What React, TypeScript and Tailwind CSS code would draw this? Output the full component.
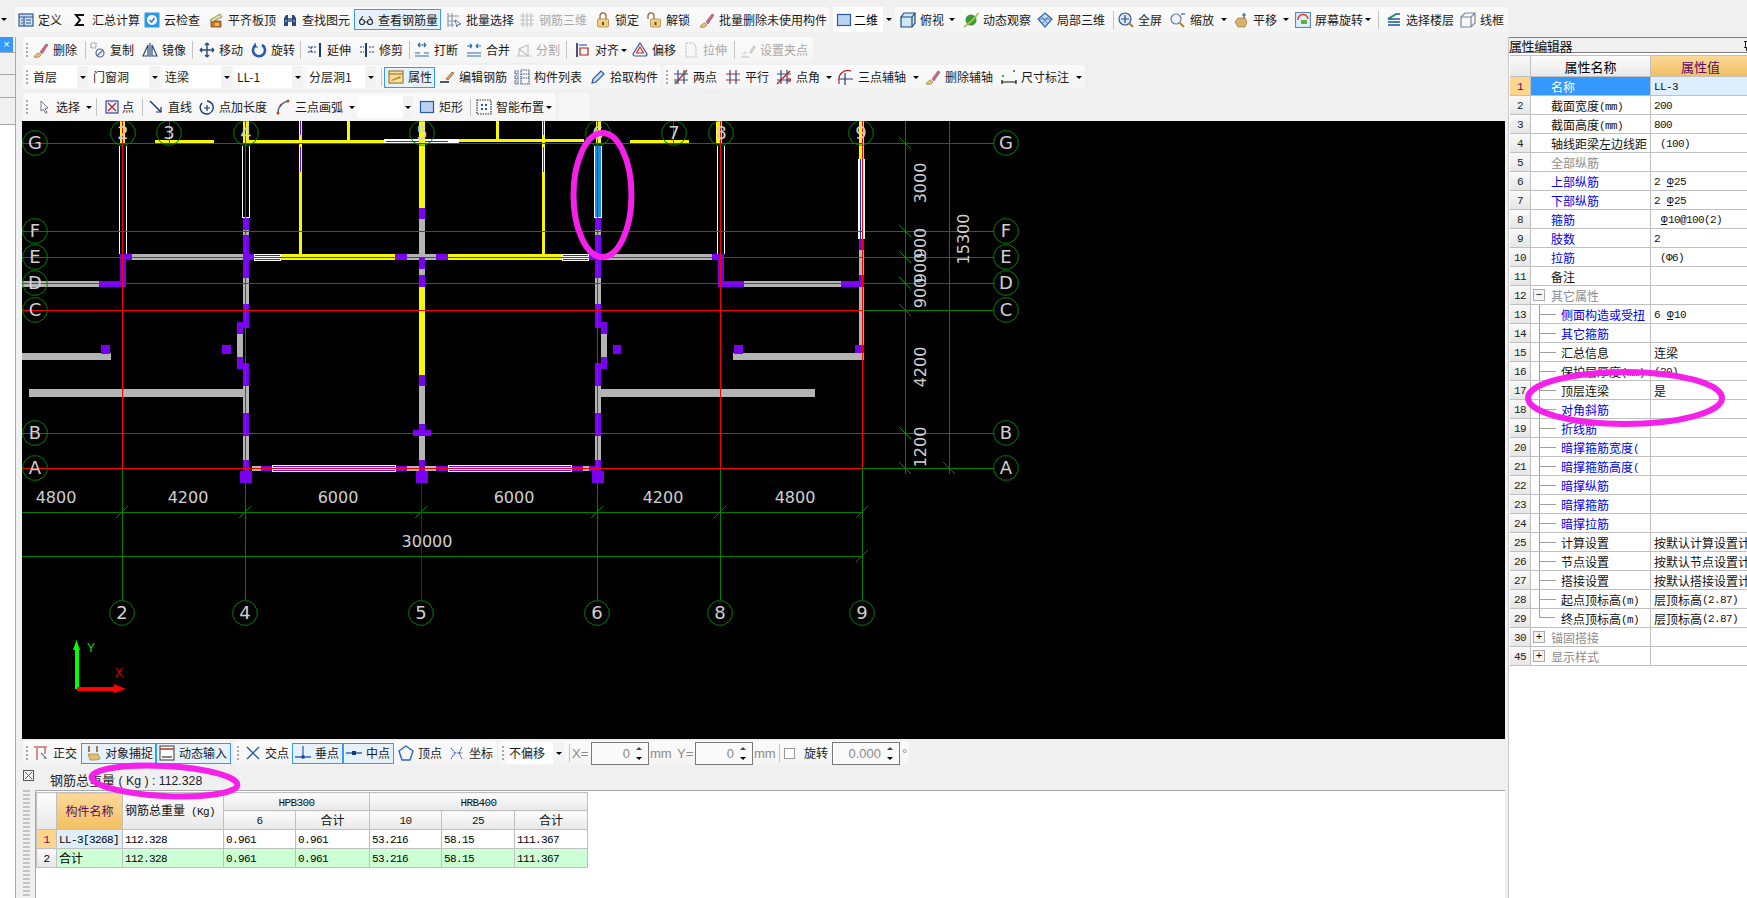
import type { ReactNode } from "react";

// small toolbar glyphs, all on a 16x16 box
function Ic({ children }: { children: ReactNode }) {
  return (
    <svg viewBox="0 0 16 16" fill="none" strokeWidth="1.2" className="w-4 h-4 shrink-0">
      {children}
    </svg>
  );
}

const brush = (
  <>
    <path d="M1 15c2-3 3-4 5-4l2 2c-1 2-4 3-7 2z" fill="#e8c070" stroke="#8a6a30" strokeWidth=".6" />
    <path d="M7 10l6-8 2 1-6 9z" fill="#d06a6a" stroke="#7a4a9a" strokeWidth=".6" />
  </>
);

const icons: Record<string, ReactNode> = {
  define: (
    <Ic>
      <rect x="1" y="2" width="14" height="12" fill="#cfe0f5" stroke="#2a5a9a" />
      <path d="M1 5h14M6 5v9M8 8h5M8 11h5M3 8h2M3 11h2" stroke="#2a5a9a" />
    </Ic>
  ),
  sigma: <Ic><path d="M12 3H4l4 5-4 5h8" stroke="#111" strokeWidth="2" /></Ic>,
  cloud: (
    <Ic>
      <rect x="0.5" y="0.5" width="15" height="15" rx="1" fill="#2a9ae8" />
      <circle cx="8" cy="8" r="5" fill="#fff" />
      <path d="M5.5 8l2 2 3-4" stroke="#2a7ad0" strokeWidth="1.5" />
    </Ic>
  ),
  slab: (
    <Ic>
      <path d="M3 15V9h10v6z" fill="#c8782a" stroke="#6a3a10" strokeWidth=".7" />
      <path d="M2 8l10-6 2 3-10 5z" fill="#e8d890" stroke="#5a7a50" strokeWidth=".7" />
      <rect x="7" y="11" width="4" height="3" fill="#f0c030" />
    </Ic>
  ),
  find: (
    <Ic>
      <path d="M2 14V6l2-3h2v11zM10 14V3h2l2 3v8z" fill="#2a4a7a" />
      <rect x="6" y="6" width="4" height="4" fill="#5a7aaa" />
      <path d="M3 9h2M11 9h2" stroke="#cfe0f5" />
    </Ic>
  ),
  glasses: (
    <Ic>
      <circle cx="4" cy="10" r="2.5" stroke="#333" />
      <circle cx="12" cy="10" r="2.5" stroke="#333" />
      <path d="M6.5 10h3M2 8l3-4M14 8l-3-4" stroke="#333" />
    </Ic>
  ),
  batch: (
    <Ic>
      <path d="M2 1v14M6 1v14M2 4h11M2 9h9M2 13h6" stroke="#8a9ab0" />
      <path d="M9 8l6 4-3 .6-1 2.4z" fill="#fff" stroke="#3a5a8a" strokeWidth=".8" />
    </Ic>
  ),
  rebar3d: <Ic><path d="M1 4h14M1 8h14M1 12h14M4 1v14M8 1v14M12 1v14" stroke="#c4c4c4" /></Ic>,
  lock: (
    <Ic>
      <path d="M5 7V4a3 3 0 0 1 6 0v3" stroke="#8a7a50" strokeWidth="1.4" />
      <rect x="2.5" y="7" width="11" height="8" rx="1" fill="#f0d080" stroke="#a08030" strokeWidth=".7" />
      <rect x="7" y="10" width="2" height="3" fill="#704a10" />
    </Ic>
  ),
  unlock: (
    <Ic>
      <path d="M2 7V4a3 3 0 0 1 6 0v3" stroke="#8a7a50" strokeWidth="1.4" />
      <rect x="4.5" y="7" width="10" height="8" rx="1" fill="#f0d080" stroke="#a08030" strokeWidth=".7" />
      <rect x="8.5" y="10" width="2" height="3" fill="#704a10" />
    </Ic>
  ),
  brush: <Ic>{brush}</Ic>,
  brushGray: <Ic><path d="M1 15h8M10 10l4-6 1 1-4 6z" stroke="#c4c4c4" /><path d="M2 12l3-3 2 2-3 2z" fill="#ddd" /></Ic>,
  plane: <Ic><rect x="1.5" y="2.5" width="13" height="11" fill="#bcd2f2" stroke="#2a5aa0" /></Ic>,
  top: (
    <Ic>
      <path d="M1 5l3-4h11v10l-3 4H1z" fill="#cfe6f5" stroke="#1a4a7a" />
      <path d="M1 5h11v10M12 5l3-4" stroke="#1a4a7a" />
    </Ic>
  ),
  orbit: (
    <Ic>
      <circle cx="8" cy="8" r="5.5" fill="#3a9a3a" />
      <path d="M1 15C4 13 13 6 15 1" stroke="#b0c050" strokeWidth="2" />
    </Ic>
  ),
  local3d: (
    <Ic>
      <path d="M8 1l7 6-7 8-7-8z" fill="#bcd8f2" stroke="#3a6aa0" />
      <path d="M4 4l7 8M12 4l-7 8M1 7h14" stroke="#3a6aa0" strokeWidth=".8" />
    </Ic>
  ),
  full: (
    <Ic>
      <circle cx="7" cy="7" r="6" fill="#dfe8f5" stroke="#3a5a8a" />
      <path d="M7 3v8M3 7h8" stroke="#1a4a9a" />
      <path d="M11 11l4 4" stroke="#b08030" strokeWidth="2" />
    </Ic>
  ),
  zoom: (
    <Ic>
      <circle cx="6" cy="7" r="5" fill="#eef3fa" stroke="#6a7a9a" />
      <path d="M10 11l4 4" stroke="#b08030" strokeWidth="2" />
      <path d="M11 2h4" stroke="#3a5a8a" />
    </Ic>
  ),
  pan: (
    <Ic>
      <path d="M2 10l3-4 7 0 2 4-2 5H5z" fill="#d8b070" stroke="#9a7a3a" strokeWidth=".7" />
      <path d="M11 1v5M9 3h4" stroke="#3a5a8a" />
    </Ic>
  ),
  rotate: (
    <Ic>
      <rect x="0.5" y="0.5" width="15" height="15" fill="#dfeefa" stroke="#5a8ac0" />
      <path d="M3 8a5 5 0 0 1 10-1" stroke="#e04020" strokeWidth="1.5" />
      <rect x="6" y="8" width="6" height="4" fill="#60b040" />
    </Ic>
  ),
  floors: (
    <Ic>
      <path d="M2 7l8-5h4M2 7h12M2 10h12M2 13h12" stroke="#1a5a9a" strokeWidth="1.5" />
      <path d="M3 6l6-3" stroke="#3a9a3a" strokeWidth="1.5" />
    </Ic>
  ),
  wire: <Ic><path d="M1 5l4-4h10v10l-4 4H1zM1 5h10v10M11 5l4-4" stroke="#7a8aa0" /></Ic>,
  copy: (
    <Ic>
      <path d="M1 1h5v5H1z" stroke="#7a8a9a" strokeDasharray="1.5 1" />
      <circle cx="10" cy="11" r="4" stroke="#5a6a8a" />
      <path d="M7 14l6-6" stroke="#5a6a8a" />
    </Ic>
  ),
  mirror: <Ic><path d="M8 1v14M1 14L6 3v11zM15 14L10 3v11z" stroke="#2a4a7a" /></Ic>,
  move: <Ic><path d="M8 1v14M1 8h14M8 1L6 3M8 1l2 2M8 15l-2-2M8 15l2-2M1 8l2-2M1 8l2 2M15 8l-2-2M15 8l-2 2" stroke="#2a4a7a" strokeWidth="1.4" /></Ic>,
  spin: <Ic><path d="M5 3a6 6 0 1 0 6 0" stroke="#2a5ab0" strokeWidth="2.6" /><path d="M4 1v4h3" stroke="#2a5ab0" /></Ic>,
  extend: <Ic><path d="M13 1v14" stroke="#1a3a7a" strokeWidth="2" /><path d="M1 5h8M1 10h8M4 5v5" stroke="#1a3a7a" strokeDasharray="2 1" /></Ic>,
  trim: <Ic><path d="M7 1v14" stroke="#1a3a7a" strokeWidth="2" /><path d="M1 5h4M1 10h4M10 5h5M10 10h5" stroke="#1a3a7a" strokeDasharray="2 1" /></Ic>,
  breakIc: <Ic><path d="M1 11h5M10 11h5M1 14h14M4 3h8M4 3l2-2M12 3l-2-2M4 3l2 2M12 3l-2 2" stroke="#2a6ab0" /></Ic>,
  merge: <Ic><path d="M1 11h14M1 14h14M1 4h5M15 4h-5M6 4L4 2M6 4L4 6M10 4l2-2M10 4l2 2" stroke="#2a6ab0" /></Ic>,
  split: <Ic><path d="M1 14h14M3 14V7l9-4v11M3 7l9 7" stroke="#c4c4c4" /></Ic>,
  align: <Ic><path d="M2 1v14" stroke="#1a2a5a" strokeWidth="1.6" /><path d="M5 6h8v7H5z" stroke="#b02020" /><path d="M4 3h8" stroke="#2a6ab0" /></Ic>,
  offset: <Ic><path d="M8 1l7 11a2 2 0 0 1-2 2H3a2 2 0 0 1-2-2z" stroke="#3a5a8a" /><path d="M8 5l3.5 6h-7z" stroke="#d03030" /></Ic>,
  stretch: <Ic><path d="M3 1h7l3 3v11H3z" stroke="#c4c4c4" strokeDasharray="2 1" /></Ic>,
  props: (
    <Ic>
      <rect x="1" y="2" width="14" height="12" fill="#f5e0a0" stroke="#a07a30" />
      <path d="M1 5h14" stroke="#a07a30" />
      <path d="M3 11l9-4 1 2-9 3z" fill="#c88a30" />
    </Ic>
  ),
  editRebar: <Ic><path d="M1 13h9" stroke="#111" strokeWidth="1.4" /><path d="M7 10l6-7 2 1-6 7z" fill="#e0a060" stroke="#8a5a20" strokeWidth=".7" /></Ic>,
  list: <Ic><path d="M1 2h3v3H1zM1 7h3v3H1zM1 12h3v3H1zM7 1h8v14H7zM7 5h8M7 9h8" stroke="#3a5a7a" strokeDasharray="1.5 .8" /></Ic>,
  pick: <Ic><path d="M2 14l1-4 8-8 3 3-8 8z" fill="#cfe0f5" stroke="#2a5aa0" /></Ic>,
  two: <Ic><path d="M5 1v14M11 1v14M1 5h14M1 11h14" stroke="#3a4a8a" /><path d="M2 15L14 1" stroke="#b03030" /><circle cx="3" cy="13" r="1.5" fill="#5a8a3a" /><circle cx="12" cy="4" r="1.5" fill="#5a8a3a" /></Ic>,
  parallel: <Ic><path d="M1 5h14M1 11h14" stroke="#b03030" /><path d="M5 1v14M11 1v14" stroke="#3a4a8a" /></Ic>,
  angle: <Ic><path d="M5 1v14M11 1v14M1 5h14M1 11h14" stroke="#3a4a8a" /><path d="M1 15L14 2" stroke="#c02020" strokeWidth="1.4" /><circle cx="13" cy="11" r="1.5" stroke="#c02020" /></Ic>,
  arcAxis: <Ic><path d="M1 15V12A9 9 0 0 1 13 2" stroke="#c02020" /><path d="M7 4v12M1 10h14" stroke="#2a3a7a" /></Ic>,
  dim: <Ic><rect x="1" y="6" width="2" height="2" fill="#4aa04a" /><rect x="12" y="1" width="2" height="2" fill="#4aa04a" /><path d="M1 11v4M15 11v4M1 13h14" stroke="#111" /></Ic>,
  select: <Ic><path d="M5 2l7 7-3 .5 2 4-1.5.7-2-4L5 12z" fill="#fff" stroke="#556" strokeWidth=".8" /></Ic>,
  point: <Ic><rect x="2" y="2" width="12" height="12" fill="#e8eef8" stroke="#2a4a9a" /><path d="M4 4l8 8M12 4l-8 8" stroke="#c02020" /></Ic>,
  line: <Ic><path d="M2 2l11 11" stroke="#1a3a6a" strokeWidth="1.4" /><path d="M13 8v5H8" stroke="#1a3a6a" /></Ic>,
  ptLen: <Ic><path d="M8 2a6.5 6.5 0 1 1-5 2" stroke="#1a3a6a" strokeWidth="1.4" /><path d="M8 6v6M5 9h6" stroke="#1a3a6a" /></Ic>,
  arc: <Ic><path d="M3 14C3 7 8 3 13 2" stroke="#3a6a9a" strokeWidth="1.4" /><circle cx="3" cy="14" r="1.5" fill="#c04020" /><circle cx="13" cy="2" r="1.5" fill="#c04020" /><circle cx="6" cy="6" r="1.2" fill="#c04020" /></Ic>,
  smart: <Ic><rect x="1" y="1" width="14" height="14" stroke="#333" strokeDasharray="1.5 1" /><path d="M5 5h2v2H5zM9 9h2v2H9zM9 5h2v2H9zM5 9h2v2H5z" fill="#2a5aa0" /></Ic>,
  ortho: <Ic><path d="M1 2h13M4 2v13M12 2v7" stroke="#d09090" strokeWidth="2" /><path d="M8 8l5 5-2 .3" stroke="#778" /></Ic>,
  snap: <Ic><path d="M4 1v6M12 1v6" stroke="#7a4a20" strokeWidth="1.4" /><path d="M3 9h10l2 5-4 1H5z" fill="#e0c070" stroke="#a08030" strokeWidth=".7" /></Ic>,
  input: <Ic><rect x="1" y="1" width="14" height="14" fill="#fff" stroke="#555" /><path d="M1 4h14" stroke="#c03030" strokeWidth="1.5" /><path d="M3 12h10" stroke="#333" /></Ic>,
  cross: <Ic><path d="M2 2l12 12M14 2L2 14" stroke="#2a5ab0" strokeWidth="1.4" /></Ic>,
  perp: <Ic><path d="M0 12h16" stroke="#2a5ab0" strokeWidth="1.4" /><path d="M8 1v11" stroke="#2a5ab0" /><rect x="6.5" y="10.5" width="3" height="3" fill="#1a3a7a" /></Ic>,
  mid: <Ic><path d="M0 8h16" stroke="#2a5ab0" strokeWidth="1.4" /><rect x="6" y="6" width="4" height="4" fill="#1a3a7a" /></Ic>,
  vertex: <Ic><path d="M8 1l7 5-3 9H4L1 6z" stroke="#2a6ab0" strokeWidth="1.4" /></Ic>,
  coord: <Ic><path d="M2 14L6 8 2 3M6 8h8M10 8l3 6M10 8l3-6" stroke="#3a5aa0" strokeDasharray="1.5 1" /></Ic>,
};

type ToolProps = {
  icon?: string;
  label: string;
  w: string;
  arrow?: string;
  off?: boolean;
  active?: boolean;
  pad?: string;
};

function Arrow({ className = "" }: { className?: string }) {
  return <span className={`w-0 h-0 shrink-0 border-x-[3px] border-t-[3px] border-x-transparent border-t-black ${className}`} />;
}

function Tool({ icon, label, w, arrow, off, active, pad }: ToolProps) {
  return (
    <div
      className={`flex items-center shrink-0 whitespace-nowrap ${w} ${pad ?? ""} ${
        active ? "h-[21px] border border-[#3399ff] bg-[#e5f1fb] box-border" : "h-full"
      } ${off ? "text-[#a8a8a8]" : "text-[#1a1a1a]"}`}
    >
      <span className="w-5 shrink-0 flex">{icon ? icons[icon] : null}</span>
      <span>{label}</span>
      {arrow ? <Arrow className={arrow} /> : null}
    </div>
  );
}

function Sep({ w }: { w: string }) {
  return (
    <div className={`shrink-0 flex items-center ${w}`}>
      <span className="w-px h-[18px] bg-[#c4c4c4]" />
    </div>
  );
}

function Grip({ w }: { w: string }) {
  return (
    <div className={`shrink-0 pl-[3px] flex items-center ${w}`}>
      <span className="w-[2px] h-[14px] bg-[repeating-linear-gradient(to_bottom,#aaa_0_2px,transparent_2px_4px)]" />
    </div>
  );
}

function Bar({ children, className = "" }: { children: ReactNode; className?: string }) {
  return <div className={`flex items-center h-full rounded-sm bg-linear-to-b from-[#fbfbfb] to-[#f4f4f4] ${className}`}>{children}</div>;
}

function Combo({ label, w, box }: { label?: string; w: string; box: string }) {
  return (
    <div className={`flex items-stretch h-[22px] shrink-0 bg-white ${w}`}>
      <span className="flex-1 pl-[2px] flex items-center text-[12px] text-[#1a1a1a] font-['Noto_Sans_CJK_SC',sans-serif]">{label}</span>
      <span className={`flex items-center justify-center bg-[#f2f2f2] ${box}`}>
        <Arrow />
      </span>
    </div>
  );
}

function Spin({ value, w }: { value: string; w: string }) {
  return (
    <div className={`flex items-center justify-end h-[23px] shrink-0 border border-[#777] bg-[#fafafa] ${w}`}>
      <span className="text-[13px] text-[#8a8a8a] font-['Liberation_Sans',sans-serif]">{value}</span>
      <span className="w-[18px] h-full flex flex-col items-center justify-center gap-[7px]">
        <span className="w-0 h-0 border-x-[3px] border-b-[3px] border-x-transparent border-b-[#444]" />
        <Arrow className="border-t-[#444]" />
      </span>
    </div>
  );
}

// ---- drawing ----
const P = "#7a00f0";
const W = "#b4b4b4";
const Y = "#f8f800";

const rects: [number, number, number, number, string][] = [
  // top beam
  [155, 140, 59, 3, Y], [248, 140, 136, 3, Y], [384, 139, 75, 5, "#fff"], [386, 141, 34, 1, P], [424, 141, 24, 1, P],
  [459, 139, 125, 3, Y], [630, 140, 59, 3, Y], [347, 121, 3, 20, Y], [496, 121, 3, 20, Y],
  // short partitions
  [299, 121, 3, 14, "#fff"], [300, 121, 1, 14, P], [299, 147, 3, 25, "#fff"], [300, 147, 1, 25, P], [299, 135, 3, 12, Y], [299, 172, 3, 82, Y],
  [542, 121, 3, 14, "#fff"], [543, 121, 1, 14, P], [542, 147, 3, 25, "#fff"], [543, 147, 1, 25, P], [542, 135, 3, 12, Y], [542, 172, 3, 82, Y],
  // tops of axes
  [120, 121, 5, 22, Y], [243, 121, 6, 22, Y], [596, 121, 5, 22, Y], [716, 121, 6, 22, Y], [859, 121, 5, 38, Y],
  // axis 2
  [119, 146, 1, 108, "#fff"], [126, 146, 1, 108, "#fff"], [120, 254, 12, 6, P], [120, 254, 6, 33, P], [99, 281, 27, 6, P], [22, 281, 77, 6, W],
  // axis 4
  [242, 146, 1, 72, "#fff"], [249, 146, 1, 72, "#fff"], [242, 217, 8, 1, "#fff"],
  [243, 218, 6, 110, P], [243, 230, 6, 5, W], [243, 278, 6, 26, W], [237, 322, 6, 12, P], [237, 334, 6, 23, W], [237, 357, 6, 12, P],
  [243, 363, 6, 23, P], [243, 386, 6, 27, W], [243, 413, 6, 23, P], [243, 436, 6, 24, W], [243, 460, 6, 12, P], [240, 471, 12, 12, P],
  // E line
  [132, 254, 111, 6, W], [249, 254, 5, 6, P], [254, 254, 27, 7, "#fff"], [255, 255, 25, 1, P], [255, 259, 25, 1, P], [281, 254, 114, 6, Y], [395, 254, 12, 6, P],
  [407, 254, 29, 6, W], [436, 254, 12, 6, P], [448, 254, 114, 6, Y], [562, 254, 27, 7, "#fff"], [563, 255, 25, 1, P], [563, 259, 25, 1, P],
  [589, 254, 6, 6, P], [601, 254, 111, 6, W], [712, 254, 12, 6, P],
  // axis 5
  [419, 121, 6, 87, Y], [419, 208, 6, 11, P], [419, 219, 6, 39, W], [419, 258, 6, 11, P], [419, 269, 6, 6, W], [419, 275, 6, 12, P],
  [419, 287, 6, 88, Y], [419, 375, 6, 11, P], [419, 386, 6, 38, W], [419, 424, 6, 12, P], [413, 430, 18, 6, P], [419, 436, 6, 24, W], [419, 460, 6, 11, P], [416, 471, 12, 12, P],
  // axis 6, the ringed one
  [594, 146, 8, 72, "#fff"], [595, 146, 6, 71, "#1a8ae0"], [595, 218, 6, 110, P], [595, 230, 6, 5, W], [595, 278, 6, 26, W],
  [601, 322, 6, 12, P], [601, 334, 6, 23, W], [601, 357, 6, 12, P], [595, 363, 6, 23, P], [595, 386, 6, 27, W], [595, 413, 6, 23, P], [595, 436, 6, 24, W], [595, 460, 6, 12, P], [592, 471, 12, 12, P],
  // axis 8
  [717, 146, 1, 108, "#fff"], [724, 146, 1, 108, "#fff"], [718, 254, 6, 33, P], [718, 281, 26, 6, P], [744, 281, 97, 6, W], [841, 281, 23, 6, P],
  // axis 9
  [858, 159, 7, 80, "#fff"], [860, 159, 1, 80, "#2222dd"], [862, 159, 1, 80, "#2222dd"], [859, 239, 5, 11, P], [859, 250, 5, 25, W], [859, 275, 5, 12, P], [859, 287, 5, 58, W], [855, 345, 9, 9, P],
  // A line
  [252, 466, 9, 5, W], [261, 466, 11, 5, P], [272, 465, 124, 7, "#fff"], [273, 466, 122, 1, P], [273, 470, 122, 1, P], [396, 466, 11, 5, P], [407, 466, 12, 5, W],
  [425, 466, 11, 5, W], [436, 466, 12, 5, P], [448, 465, 124, 7, "#fff"], [449, 466, 122, 1, P], [449, 470, 122, 1, P], [572, 466, 11, 5, P], [583, 466, 6, 5, W], [589, 466, 6, 5, P],
  // free bars and stubs
  [22, 353, 89, 7, W], [733, 353, 131, 7, W], [29, 389, 214, 8, W], [601, 389, 214, 8, W],
  [101, 345, 9, 9, P], [222, 345, 9, 9, P], [613, 345, 8, 9, P], [734, 345, 9, 9, P],
];

const rows = [143, 231, 257, 283, 310, 433, 468];
const rowNames = ["G", "F", "E", "D", "C", "B", "A"];
const cols = [122, 245, 597, 720, 862];
const bottomNames: [number, string][] = [[122, "2"], [245, "4"], [421, "5"], [597, "6"], [720, "8"], [862, "9"]];
const topNames: [number, string][] = [[123, "2"], [169, "3"], [246, "4"], [422, "5"], [598, "6"], [674, "7"], [721, "8"], [861, "9"]];

function Bubble({ x, y, t }: { x: number; y: number; t: string }) {
  const pts = Array.from({ length: 12 }, (_, i) => {
    const a = (i * Math.PI) / 6 + Math.PI / 12;
    return `${(x + 12.5 * Math.cos(a)).toFixed(1)},${(y + 12.5 * Math.sin(a)).toFixed(1)}`;
  }).join(" ");
  return (
    <>
      <polygon points={pts} fill="none" stroke="#008000" />
      <text x={x} y={y + 6} textAnchor="middle" fontSize="18" fill="#d0d0d0" fontFamily="DejaVu Sans">
        {t}
      </text>
    </>
  );
}

function Dim({ x, y, t, v }: { x: number; y: number; t: string; v?: boolean }) {
  return (
    <text
      x={x}
      y={y}
      textAnchor="middle"
      dominantBaseline="central"
      fontSize="16"
      fill="#d0d0d0"
      fontFamily="DejaVu Sans"
      transform={v ? `rotate(-90 ${x} ${y})` : undefined}
    >
      {t}
    </text>
  );
}

function Tick({ x, y, back }: { x: number; y: number; back?: boolean }) {
  return back ? (
    <path d={`M${x - 6} ${y - 6}L${x + 6} ${y + 6}`} stroke="#008000" />
  ) : (
    <path d={`M${x - 6} ${y + 6}L${x + 6} ${y - 6}`} stroke="#008000" />
  );
}

function Plan() {
  return (
    <svg viewBox="22 121 1483 618" className="block w-[1483px] h-[618px] bg-black">
      {/* dimension lines */}
      <g shapeRendering="crispEdges">
        {rows.map((y) => (
          <path key={y} d={`M862 ${y + 0.5}H994`} stroke="#008000" />
        ))}
        <path d="M905.5 121V474M949.5 121V474M22 512.5H862M22 556.5H862" stroke="#008000" />
        {cols.map((x) => (
          <path key={x} d={`M${x + 0.5} 468V600`} stroke="#008000" />
        ))}
      </g>
      <path d="M421.5 121V600" stroke="#8b0000" shapeRendering="crispEdges" />
      {[...rows.map((y) => [905, y]), [949, 468]].map(([x, y]) => (
        <Tick key={`${x}-${y}`} x={x} y={y} back />
      ))}
      {[122, 245, 421, 597, 720, 862].map((x) => (
        <Tick key={x} x={x} y={512} />
      ))}
      <Tick x={862} y={556} />

      <g shapeRendering="crispEdges">
        {rects.map(([x, y, w, h, c], i) => (
          <rect key={i} x={x} y={y} width={w} height={h} fill={c} />
        ))}
        {rows.map((y) => (
          <path key={y} d={`M22 ${y + 0.5}H862`} stroke="#ff0000" />
        ))}
        {cols.map((x) => (
          <path key={x} d={`M${x + 0.5} 121V468`} stroke="#ff0000" />
        ))}
        <path d="M169.5 121V143M673.5 121V143" stroke="#ff0000" />
      </g>

      {rowNames.map((t, i) => (
        <Bubble key={t} x={35} y={rows[i]} t={t} />
      ))}
      {rowNames.map((t, i) => (
        <Bubble key={t} x={1006} y={rows[i]} t={t} />
      ))}
      {topNames.map(([x, t]) => (
        <Bubble key={t} x={x} y={133} t={t} />
      ))}
      {bottomNames.map(([x, t]) => (
        <Bubble key={t} x={x} y={613} t={t} />
      ))}

      <Dim x={56} y={497} t="4800" />
      <Dim x={188} y={497} t="4200" />
      <Dim x={338} y={497} t="6000" />
      <Dim x={514} y={497} t="6000" />
      <Dim x={663} y={497} t="4200" />
      <Dim x={795} y={497} t="4800" />
      <Dim x={427} y={541} t="30000" />
      <Dim x={920} y={183} t="3000" v />
      <Dim x={920} y={243} t="900" v />
      <Dim x={920} y={268} t="900" v />
      <Dim x={920} y={293} t="900" v />
      <Dim x={920} y={367} t="4200" v />
      <Dim x={920} y={447} t="1200" v />
      <Dim x={963} y={239} t="15300" v />

      {/* axis marker */}
      <path d="M75 689V650H73L76.5 640L80 650H79V689z" fill="#00ff00" />
      <path d="M77 687H114V684L126 689L114 693V691H77z" fill="#ff0000" />
      <text x={91} y={652} textAnchor="middle" fontSize="12" fill="#00e000" fontFamily="Liberation Sans">Y</text>
      <text x={119} y={677} textAnchor="middle" fontSize="12" fill="#e00000" fontFamily="Liberation Sans">X</text>
    </svg>
  );
}

// ---- property grid ----
type PropRow = { n: number; label: string; unit?: string; value?: ReactNode; tone?: "blue" | "gray"; tree?: "mid" | "end"; box?: "+" | "-" };

const Mono = ({ children }: { children: ReactNode }) => (
  <span className="font-['Liberation_Mono',monospace] text-[11px] tracking-[-0.6px]">{children}</span>
);
const Hrb = () => <span className="underline text-[11px] mx-px">Φ</span>;

const props: PropRow[] = [
  { n: 1, label: "名称", value: <Mono>LL-3</Mono> },
  { n: 2, label: "截面宽度", unit: "(mm)", value: <Mono>200</Mono> },
  { n: 3, label: "截面高度", unit: "(mm)", value: <Mono>800</Mono> },
  { n: 4, label: "轴线距梁左边线距", value: <Mono> (100)</Mono> },
  { n: 5, label: "全部纵筋", tone: "gray" },
  { n: 6, label: "上部纵筋", tone: "blue", value: <Mono>2 <Hrb />25</Mono> },
  { n: 7, label: "下部纵筋", tone: "blue", value: <Mono>2 <Hrb />25</Mono> },
  { n: 8, label: "箍筋", tone: "blue", value: <Mono> <Hrb />10@100(2)</Mono> },
  { n: 9, label: "肢数", tone: "blue", value: <Mono>2</Mono> },
  { n: 10, label: "拉筋", tone: "blue", value: <Mono> (Φ6)</Mono> },
  { n: 11, label: "备注" },
  { n: 12, label: "其它属性", tone: "gray", box: "-" },
  { n: 13, label: "侧面构造或受扭", tone: "blue", tree: "mid", value: <Mono>6 <Hrb />10</Mono> },
  { n: 14, label: "其它箍筋", tone: "blue", tree: "mid" },
  { n: 15, label: "汇总信息", tree: "mid", value: "连梁" },
  { n: 16, label: "保护层厚度", unit: "(mm)", tree: "mid", value: <Mono>(20)</Mono> },
  { n: 17, label: "顶层连梁", tree: "mid", value: "是" },
  { n: 18, label: "对角斜筋", tone: "blue", tree: "mid" },
  { n: 19, label: "折线筋", tone: "blue", tree: "mid" },
  { n: 20, label: "暗撑箍筋宽度", unit: "(", tone: "blue", tree: "mid" },
  { n: 21, label: "暗撑箍筋高度", unit: "(", tone: "blue", tree: "mid" },
  { n: 22, label: "暗撑纵筋", tone: "blue", tree: "mid" },
  { n: 23, label: "暗撑箍筋", tone: "blue", tree: "mid" },
  { n: 24, label: "暗撑拉筋", tone: "blue", tree: "mid" },
  { n: 25, label: "计算设置", tree: "mid", value: "按默认计算设置计" },
  { n: 26, label: "节点设置", tree: "mid", value: "按默认节点设置计" },
  { n: 27, label: "搭接设置", tree: "mid", value: "按默认搭接设置计" },
  { n: 28, label: "起点顶标高", unit: "(m)", tree: "mid", value: <>层顶标高<Mono>(2.87)</Mono></> },
  { n: 29, label: "终点顶标高", unit: "(m)", tree: "end", value: <>层顶标高<Mono>(2.87)</Mono></> },
  { n: 30, label: "锚固搭接", tone: "gray", box: "+" },
  { n: 45, label: "显示样式", tone: "gray", box: "+" },
];

function PropLine({ r }: { r: PropRow }) {
  const first = r.n === 1;
  const tone = first ? "text-white" : r.tone === "blue" ? "text-[#0000ee]" : r.tone === "gray" ? "text-[#8c8c8c]" : "text-[#111]";
  return (
    <div className="flex h-[19px] border-b border-[#c0c0c0] box-border">
      <div
        className={`w-[21px] shrink-0 flex items-center justify-center pt-[2px] border-r border-[#c0c0c0] ${
          first ? "bg-[#ffd48c] text-[#5a0a6a]" : "bg-linear-to-b from-[#fafafa] to-[#e6e6e6] text-[#222]"
        }`}
      >
        <Mono>{r.n}</Mono>
      </div>
      <div className={`w-[120px] shrink-0 flex items-center overflow-hidden whitespace-nowrap border-r border-[#c0c0c0] ${tone} ${first ? "bg-[#3399ff]" : ""}`}>
        {r.box ? (
          <span className="ml-[2px] mr-[6px] w-3 h-3 border border-[#aaa] bg-[#f4f4f4] flex items-center justify-center text-[11px] leading-none text-[#111] font-['Liberation_Mono',monospace] shrink-0">
            {r.box === "-" ? "−" : "+"}
          </span>
        ) : r.tree === "mid" ? (
          <span className="ml-[8px] w-[22px] h-full shrink-0 border-l border-[#a0a0a0] flex items-center">
            <span className="w-[16px] h-px bg-[#a0a0a0]" />
          </span>
        ) : r.tree === "end" ? (
          <span className="ml-[8px] w-[22px] h-full shrink-0">
            <span className="block w-[16px] h-1/2 border-l border-b border-[#a0a0a0]" />
          </span>
        ) : (
          <span className="w-5 shrink-0" />
        )}
        <span className="pt-[2px]">{r.label}</span>
        {r.unit ? <span className="pt-[2px]"><Mono>{r.unit}</Mono></span> : null}
      </div>
      <div className={`flex-1 flex items-center pl-[3px] pt-[2px] overflow-hidden whitespace-pre text-[#111] ${first ? "bg-[#ddeeff]" : ""}`}>{r.value}</div>
    </div>
  );
}

const th = "border border-[#c0c0c0] bg-linear-to-b from-[#fdfdfd] to-[#e8e8e8] font-normal text-[#111]";
const td = "border border-[#c0c0c0] px-[2px] text-left font-normal whitespace-nowrap overflow-hidden";

function WeightTable() {
  const cells = ["112.328", "0.961", "0.961", "53.216", "58.15", "111.367"];
  return (
    <table className="table-fixed w-[551px] text-[12px]">
      <colgroup>
        <col className="w-[20px]" />
        <col className="w-[66px]" />
        <col className="w-[101px]" />
        <col className="w-[72px]" />
        <col className="w-[74px]" />
        <col className="w-[72px]" />
        <col className="w-[73px]" />
        <col className="w-[73px]" />
      </colgroup>
      <thead>
        <tr className="h-[18px]">
          <th rowSpan={2} className={th} />
          <th rowSpan={2} className="border border-[#c0c0c0] bg-linear-to-b from-[#fcd898] to-[#f2bf60] font-normal text-[#5a0a6a]">构件名称</th>
          <th rowSpan={2} className={`${th} text-left pl-[2px] whitespace-pre`}>钢筋总重量<Mono> (Kg)</Mono></th>
          <th colSpan={2} className={th}><Mono>HPB300</Mono></th>
          <th colSpan={3} className={th}><Mono>HRB400</Mono></th>
        </tr>
        <tr className="h-[19px]">
          <th className={th}><Mono>6</Mono></th>
          <th className={th}>合计</th>
          <th className={th}><Mono>10</Mono></th>
          <th className={th}><Mono>25</Mono></th>
          <th className={th}>合计</th>
        </tr>
      </thead>
      <tbody>
        <tr className="h-[19px]">
          <td className="border border-[#c0c0c0] bg-[#ffd48c] text-center text-[#5a0a6a]"><Mono>1</Mono></td>
          <td className={`${td} bg-[#ddeeff]`}><Mono>LL-3[3268]</Mono></td>
          {cells.map((c, i) => (
            <td key={i} className={td}><Mono>{c}</Mono></td>
          ))}
        </tr>
        <tr className="h-[19px] bg-[#ccffd4]">
          <td className="border border-[#c0c0c0] bg-linear-to-b from-[#fafafa] to-[#e6e6e6] text-center"><Mono>2</Mono></td>
          <td className={td}>合计</td>
          {cells.map((c, i) => (
            <td key={i} className={td}><Mono>{c}</Mono></td>
          ))}
        </tr>
      </tbody>
    </table>
  );
}

export default function App() {
  return (
    <div className="relative w-[1747px] h-[898px] overflow-hidden bg-[#f0f0f0] text-[12px] leading-none font-['Noto_Sans_CJK_SC','Liberation_Sans',sans-serif]">
      {/* top toolbar */}
      <div className="flex h-[37px] pt-[7px] pb-[5px]">
        <div className="w-[15px] flex items-center pl-[1px]">
          <Arrow />
        </div>
        <Bar className="pl-[3px] w-[814px]">
          <Tool icon="define" label="定义" w="w-[54px]" />
          <Tool icon="sigma" label="汇总计算" w="w-[72px]" />
          <Tool icon="cloud" label="云检查" w="w-[64px]" />
          <Tool icon="slab" label="平齐板顶" w="w-[74px]" />
          <Tool icon="find" label="查找图元" w="w-[72px]" />
          <Tool icon="glasses" label="查看钢筋量" w="w-[87px] mr-[5px]" active pad="pl-[3px]" />
          <Tool icon="batch" label="批量选择" w="w-[73px]" />
          <Tool icon="rebar3d" label="钢筋三维" w="w-[76px]" off />
          <Tool icon="lock" label="锁定" w="w-[51px]" />
          <Tool icon="unlock" label="解锁" w="w-[53px]" />
          <Tool icon="brush" label="批量删除未使用构件" w="w-[125px]" />
        </Bar>
        <Bar className="ml-[4px] w-[675px]">
          <div className="flex items-stretch w-[62px] h-full bg-white mr-[3px] shrink-0 pl-[3px]">
            <span className="w-[18px] flex items-center">{icons.plane}</span>
            <span className="flex items-center w-[29px]">二维</span>
            <span className="w-[12px] flex items-center justify-center bg-[#f2f2f2]">
              <Arrow />
            </span>
          </div>
          <Tool icon="top" label="俯视" w="w-[65px]" arrow="ml-[5px]" pad="pl-[2px]" />
          <Tool icon="orbit" label="动态观察" w="w-[74px]" />
          <Tool icon="local3d" label="局部三维" w="w-[76px]" />
          <Sep w="w-[5px]" />
          <Tool icon="full" label="全屏" w="w-[52px]" />
          <Tool icon="zoom" label="缩放" w="w-[63px]" arrow="ml-[7px]" />
          <Tool icon="pan" label="平移" w="w-[62px]" arrow="ml-[6px]" />
          <Tool icon="rotate" label="屏幕旋转" w="w-[83px]" arrow="ml-[2px]" />
          <Sep w="w-[8px]" />
          <Tool icon="floors" label="选择楼层" w="w-[74px]" />
          <Tool icon="wire" label="线框" w="w-[45px]" />
        </Bar>
      </div>

      <div className="flex h-[861px]">
        {/* left strip */}
        <div className="w-[22px] shrink-0 flex">
          <div className="w-[16px] h-full border-r border-[#a8a8a8] flex flex-col">
            <div className="w-[13px] h-[15px] bg-[#3399ff] text-white text-[11px] flex items-center justify-center font-['Liberation_Sans',sans-serif]">×</div>
            <div className="h-[23px] border-y border-[#a8a8a8]" />
            <div className="h-[23px] border-b border-[#a8a8a8]" />
            <div className="h-[27px] border-b border-[#a8a8a8]" />
            <div className="flex-1 bg-white" />
          </div>
        </div>

        {/* middle column */}
        <div className="w-[1483px] shrink-0 flex flex-col">
          <div className="h-[26px] pl-px">
            <Bar className="w-[790px]">
              <Grip w="w-[10px]" />
              <Tool icon="brush" label="删除" w="w-[52px]" />
              <Sep w="w-[5px]" />
              <Tool icon="copy" label="复制" w="w-[52px]" />
              <Tool icon="mirror" label="镜像" w="w-[50px]" />
              <Sep w="w-[7px]" />
              <Tool icon="move" label="移动" w="w-[52px]" />
              <Tool icon="spin" label="旋转" w="w-[49px]" />
              <Sep w="w-[7px]" />
              <Tool icon="extend" label="延伸" w="w-[52px]" />
              <Tool icon="trim" label="修剪" w="w-[50px]" />
              <Sep w="w-[5px]" />
              <Tool icon="breakIc" label="打断" w="w-[52px]" />
              <Tool icon="merge" label="合并" w="w-[50px]" />
              <Tool icon="split" label="分割" w="w-[50px]" off />
              <Sep w="w-[9px]" />
              <Tool icon="align" label="对齐" w="w-[57px]" arrow="ml-[2px]" />
              <Tool icon="offset" label="偏移" w="w-[51px]" />
              <Tool icon="stretch" label="拉伸" w="w-[51px]" off />
              <Sep w="w-[6px]" />
              <Tool icon="brushGray" label="设置夹点" w="w-[73px]" off />
            </Bar>
          </div>

          <div className="flex h-[24px] mt-[2px] pl-px">
            <Bar className="w-[638px]">
              <Grip w="w-[8px]" />
              <Combo label="首层" w="w-[57px] mr-[3px]" box="w-[11px]" />
              <Combo label="门窗洞" w="w-[69px] mr-[3px]" box="w-[11px]" />
              <Combo label="连梁" w="w-[69px] mr-[3px]" box="w-[11px]" />
              <Combo label="LL-1" w="w-[68px] mr-[4px]" box="w-[11px]" />
              <Combo label="分层洞1" w="w-[69px]" box="w-[11px]" />
              <Sep w="w-[8px] pl-[5px]" />
              <Tool icon="props" label="属性" w="w-[51px] mr-[4px]" active pad="pl-[3px]" />
              <Tool icon="editRebar" label="编辑钢筋" w="w-[75px]" />
              <Tool icon="list" label="构件列表" w="w-[76px]" />
              <Tool icon="pick" label="拾取构件" w="w-[71px]" />
            </Bar>
            <Bar className="ml-[2px] w-[422px]">
              <Grip w="w-[10px]" />
              <Tool icon="two" label="两点" w="w-[52px]" />
              <Tool icon="parallel" label="平行" w="w-[51px]" />
              <Tool icon="angle" label="点角" w="w-[62px]" arrow="ml-[6px]" />
              <Tool icon="arcAxis" label="三点辅轴" w="w-[87px]" arrow="ml-[7px]" />
              <Tool icon="brush" label="删除辅轴" w="w-[76px]" />
              <Tool icon="dim" label="尺寸标注" w="w-[74px]" arrow="ml-[7px]" />
            </Bar>
          </div>

          <div className="flex h-[28px] mt-[4px] pl-px">
            <Bar className="w-[533px]">
              <Grip w="w-[13px]" />
              <Tool icon="select" label="选择" w="w-[60px]" arrow="ml-[6px]" />
              <Sep w="w-[8px]" />
              <Tool icon="point" label="点" w="w-[38px]" pad="[&>span:first-child]:w-[18px]" />
              <Sep w="w-[6px]" />
              <Tool icon="line" label="直线" w="w-[51px]" />
              <Tool icon="ptLen" label="点加长度" w="w-[76px]" />
              <Tool icon="arc" label="三点画弧" w="w-[83px]" arrow="ml-[6px]" />
              <Combo w="w-[55px] mr-[6px]" box="w-[10px]" />
              <Tool icon="plane" label="矩形" w="w-[51px]" />
              <Sep w="w-[6px]" />
              <Tool icon="smart" label="智能布置" w="w-[80px]" arrow="ml-[2px]" />
            </Bar>
            <div className="ml-[3px] w-[30px] h-full bg-[#f7f7f7]" />
          </div>

          <Plan />

          {/* snap toolbar */}
          <div className="flex h-[24px] mt-[2px] pl-px">
            <Bar className="w-[209px]">
              <Grip w="w-[10px]" />
              <Tool icon="ortho" label="正交" w="w-[48px]" />
              <Tool icon="snap" label="对象捕捉" w="w-[75px]" active pad="pl-[3px]" />
              <Tool icon="input" label="动态输入" w="w-[75px]" active pad="pl-[2px]" />
            </Bar>
            <Bar className="ml-[2px] w-[263px]">
              <Grip w="w-[11px]" />
              <Tool icon="cross" label="交点" w="w-[47px]" />
              <Tool icon="perp" label="垂点" w="w-[51px]" active pad="pl-[2px]" />
              <Tool icon="mid" label="中点" w="w-[51px] mr-[4px]" active pad="pl-[2px]" />
              <Tool icon="vertex" label="顶点" w="w-[51px]" />
              <Tool icon="coord" label="坐标" w="w-[48px]" />
            </Bar>
            <Bar className="ml-[2px] w-[410px] text-[#8a8a8a] text-[13px] font-['Liberation_Sans','Noto_Sans_CJK_SC',sans-serif]">
              <Grip w="w-[8px]" />
              <Combo label="不偏移" w="w-[57px]" box="w-[11px]" />
              <Sep w="w-[8px] pl-[5px]" />
              <span className="w-[19px]">X=</span>
              <Spin value="0" w="w-[58px]" />
              <span className="w-[26px] pl-px">mm</span>
              <span className="w-[18px] ml-[2px]">Y=</span>
              <Spin value="0" w="w-[58px]" />
              <span className="w-[26px] pl-px">mm</span>
              <Sep w="w-[5px]" />
              <span className="w-[11px] h-[11px] border border-[#999] bg-white" />
              <span className="ml-[9px] w-[28px] text-[12px] text-[#1a1a1a] font-['Noto_Sans_CJK_SC',sans-serif]">旋转</span>
              <Spin value="0.000" w="w-[68px]" />
              <span className="ml-[2px]">°</span>
            </Bar>
          </div>

          {/* weight panel */}
          <div className="h-[25px] pl-px flex items-center">
            <svg viewBox="0 0 11 11" className="w-[11px] h-[11px] shrink-0 mb-[4px]" fill="none">
              <rect x=".5" y=".5" width="10" height="10" fill="#f4f4f4" stroke="#555" />
              <path d="M2 2l7 7" stroke="#c03030" />
              <path d="M9 2L2 9" stroke="#555" />
            </svg>
            <span className="ml-[16px] mt-[7px] text-[12.3px] text-[#222] whitespace-pre font-['Liberation_Sans','Noto_Sans_CJK_SC',sans-serif]">
              <span className="text-[13px]">钢筋总重量</span> ( Kg ) : 112.328
            </span>
          </div>
          <div className="flex-1 flex">
            <div className="w-[13px] shrink-0 pl-[1px]">
              <span className="block w-[7px] h-full bg-[repeating-linear-gradient(to_bottom,#c4c4c4_0_2px,transparent_2px_4px)]" />
            </div>
            <div className="flex-1 bg-white border-t border-l border-[#a8a8a8] pt-px">
              <WeightTable />
            </div>
          </div>
        </div>

        {/* property editor */}
        <div className="ml-[3px] flex-1 flex flex-col bg-white border-l border-[#c8c8c8]">
          <div className="h-[16px] flex items-center justify-between bg-[#f0f0f0] border-y border-[#808080] text-[13px] text-[#111]">
            <span className="tracking-[-0.4px]">属性编辑器</span>
            <svg viewBox="0 0 7 11" className="w-[7px] h-[11px] shrink-0" fill="none" stroke="#222">
              <path d="M2.5 1v6M5.5 1v6M1 7.5h6M1 1.5h6M3.5 8v3" />
            </svg>
          </div>
          <div className="pl-[1px] pt-[2px]">
            <div className="flex h-[22px] border-y border-[#c0c0c0] box-border text-[13px]">
              <div className="w-[21px] shrink-0 border-r border-[#c0c0c0] bg-linear-to-b from-[#fafafa] to-[#e8e8e8]" />
              <div className="w-[120px] shrink-0 flex items-center justify-center border-r border-[#c0c0c0] bg-linear-to-b from-[#fdfdfd] to-[#e8e8e8]">属性名称</div>
              <div className="flex-1 flex items-center justify-center bg-linear-to-b from-[#fcd898] to-[#f2bf60] text-[#5a0a6a]">属性值</div>
            </div>
            {props.map((r) => (
              <PropLine key={r.n} r={r} />
            ))}
          </div>
        </div>
      </div>

      {/* hand-drawn highlight rings */}
      <svg viewBox="0 0 1747 898" className="absolute inset-0 w-[1747px] h-[898px] pointer-events-none" fill="none" stroke="#f520ea" strokeWidth="6">
        <ellipse cx="602.5" cy="195" rx="29" ry="62" />
        <ellipse cx="1625" cy="398" rx="97" ry="26" />
        <ellipse cx="164.5" cy="781" rx="73" ry="15" transform="rotate(3 164.5 781)" />
      </svg>
    </div>
  );
}
